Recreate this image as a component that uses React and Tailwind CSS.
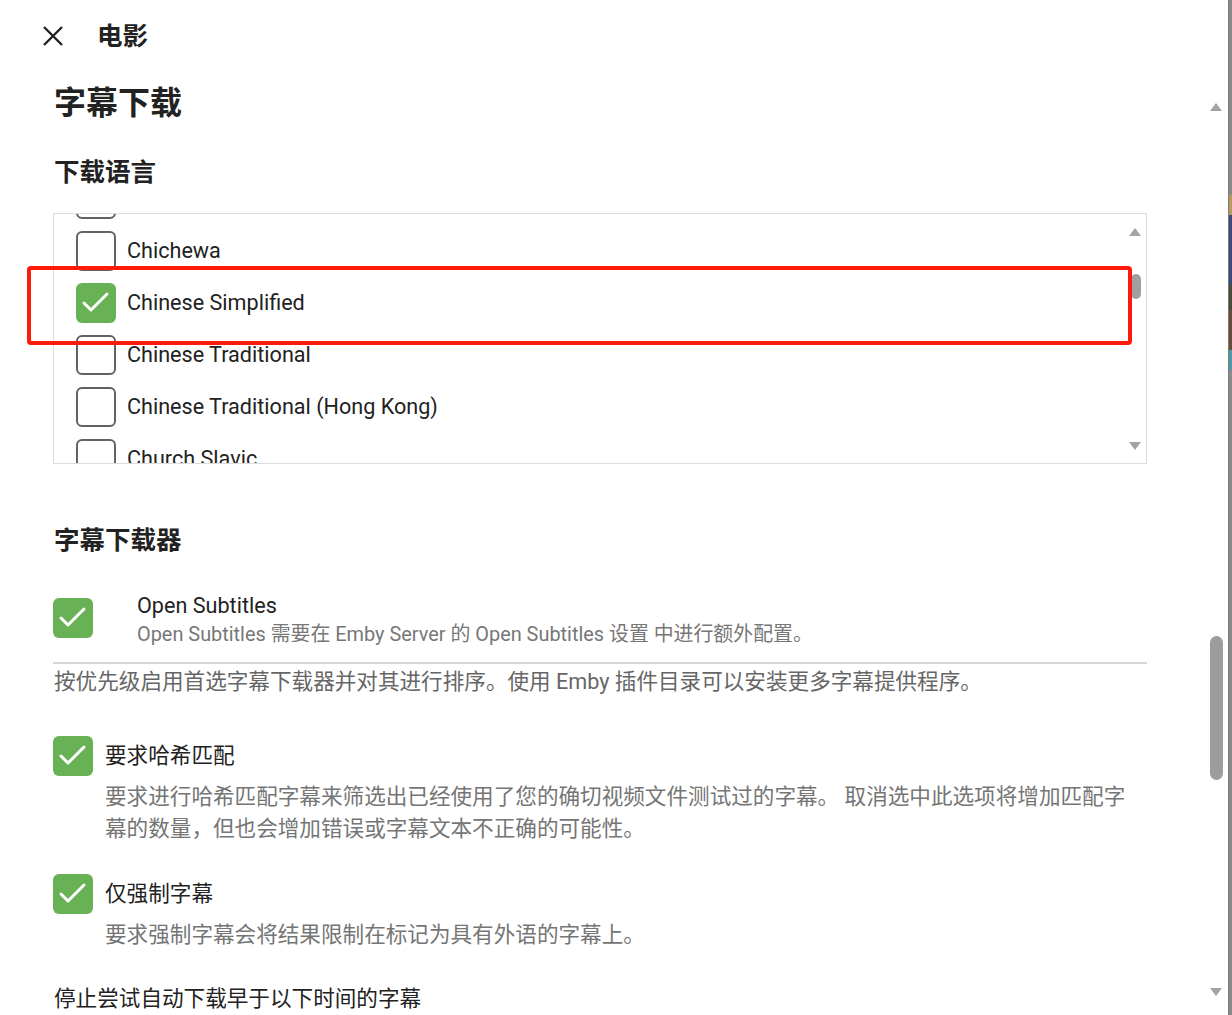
import React from "react";

const FONT = { fontFamily: "Roboto, 'Noto Sans CJK SC', sans-serif" };

function Check({ checked }) {
  if (checked) {
    return (
      <div className="w-[40px] h-[40px] shrink-0 rounded-[6px] bg-[#68b155] flex items-center justify-center">
        <svg width="40" height="40" viewBox="0 0 40 40">
          <path d="M8 20 L15 27 L31 11" fill="none" stroke="white" strokeWidth="3" strokeLinecap="round" strokeLinejoin="round" />
        </svg>
      </div>
    );
  }
  return <div className="w-[40px] h-[40px] shrink-0 rounded-[6px] border-[2.5px] border-[#626262] bg-white" />;
}

const langs = [
  ["", false],
  ["Chichewa", false],
  ["Chinese Simplified", true],
  ["Chinese Traditional", false],
  ["Chinese Traditional (Hong Kong)", false],
  ["Church Slavic", false],
];

function Up({ className }) {
  return (
    <svg className={className} width="14" height="10" viewBox="0 0 14 10">
      <path d="M7 1 L13 9 L1 9 Z" fill="#a3a3a3" />
    </svg>
  );
}
function Down({ className }) {
  return (
    <svg className={className} width="14" height="10" viewBox="0 0 14 10">
      <path d="M1 1 L13 1 L7 9 Z" fill="#a3a3a3" />
    </svg>
  );
}

export default function App() {
  return (
    <div className="w-[1232px] h-[1015px] flex overflow-hidden bg-white text-[#222]" style={FONT}>
      <div className="relative flex-1 rounded-br-[8px] overflow-hidden">
        {/* header */}
        <div className="h-[72px] flex items-center">
          <svg className="ml-[41px]" width="24" height="24" viewBox="0 0 24 24">
            <path d="M3 3 L21 21 M21 3 L3 21" stroke="#222" strokeWidth="2.4" fill="none" />
          </svg>
          <div className="ml-[32px] text-[25.5px] font-bold leading-[32px]">电影</div>
        </div>

        <div className="pl-[54px] w-[1147px]">
          <h1 className="mt-[11px] text-[32px] leading-[40px] font-bold">字幕下载</h1>
          <h2 className="mt-[32px] text-[25.5px] leading-[34px] font-bold">下载语言</h2>

          <div className="relative mt-[24px] -ml-[1px] h-[251px] border border-[#dcdcdc] overflow-hidden">
            <div className="-mt-[41px]">
              {langs.map(([name, checked], i) => (
                <div key={i} className="h-[52px] flex items-center pl-[22px]">
                  <Check checked={checked} />
                  <span className="ml-[11px] text-[21.6px] leading-[28px] text-[#222] whitespace-nowrap">{name}</span>
                </div>
              ))}
            </div>
            <Up className="absolute left-[1074px] top-[13px]" />
            <div className="absolute left-[1077px] top-[60px] w-[10px] h-[25px] rounded-[5px] bg-[#a0a0a0]" />
            <Down className="absolute left-[1074px] top-[227px]" />
          </div>

          <h2 className="mt-[59px] text-[25.5px] leading-[34px] font-bold">字幕下载器</h2>

          <div className="mt-[35px] flex items-start">
            <div className="mt-[6px] -ml-[1px]">
              <Check checked />
            </div>
            <div className="ml-[44px]">
              <div className="text-[21.6px] leading-[28px] text-[#222]">Open Subtitles</div>
              <div className="text-[19.9px] leading-[30px] text-[#777]">
                Open Subtitles 需要在 Emby Server 的 Open Subtitles 设置 中进行额外配置。
              </div>
            </div>
          </div>

          <div className="mt-[12px] -ml-[1px] h-[2px] bg-[#d6d6d6]" />
          <p className="mt-[2px] text-[21.6px] leading-[32px] text-[#666]">
            按优先级启用首选字幕下载器并对其进行排序。使用 Emby 插件目录可以安装更多字幕提供程序。
          </p>

          <div className="mt-[38px] flex items-center">
            <div className="-ml-[1px]">
              <Check checked />
            </div>
            <span className="ml-[12px] text-[21.6px] leading-[40px] text-[#222]">要求哈希匹配</span>
          </div>
          <p className="mt-[5px] pl-[51px] text-[21.6px] leading-[32px] text-[#757575]">
            要求进行哈希匹配字幕来筛选出已经使用了您的确切视频文件测试过的字幕。 取消选中此选项将增加匹配字
            <br />
            幕的数量，但也会增加错误或字幕文本不正确的可能性。
          </p>

          <div className="mt-[29px] flex items-center">
            <div className="-ml-[1px]">
              <Check checked />
            </div>
            <span className="ml-[12px] text-[21.6px] leading-[40px] text-[#222]">仅强制字幕</span>
          </div>
          <p className="mt-[5px] pl-[51px] text-[21.6px] leading-[32px] text-[#757575]">
            要求强制字幕会将结果限制在标记为具有外语的字幕上。
          </p>

          <p className="mt-[32px] text-[21.6px] leading-[32px] text-[#222]">停止尝试自动下载早于以下时间的字幕</p>
        </div>

        {/* red annotation */}
        <div className="absolute left-[27px] top-[266px] w-[1105px] h-[79px] border-[4px] border-[#ff1a0a] rounded-[4px]" />

        {/* main scrollbar */}
        <Up className="absolute left-[1209px] top-[102px]" />
        <div className="absolute left-[1210px] top-[636px] w-[13px] h-[144px] rounded-[7px] bg-[#9c9c9c]" />
        <Down className="absolute left-[1209px] top-[987px]" />
      </div>

      <div className="w-[4px] h-full flex">
        <div className="w-[1px] h-full bg-[#7a7a7a]" />
        <div className="flex-1 h-full flex flex-col">
          <div className="h-[195px] bg-[#8a8a8a]" />
          <div className="h-[20px] bg-[#b89a60]" />
          <div className="h-[70px] bg-[#3a4a7a]" />
          <div className="h-[25px] bg-[#4a4a3a]" />
          <div className="h-[40px] bg-[#6a4a3a]" />
          <div className="h-[20px] bg-[#4a9aa8]" />
          <div className="flex-1 bg-[#8a8a8a]" />
        </div>
      </div>
    </div>
  );
}
